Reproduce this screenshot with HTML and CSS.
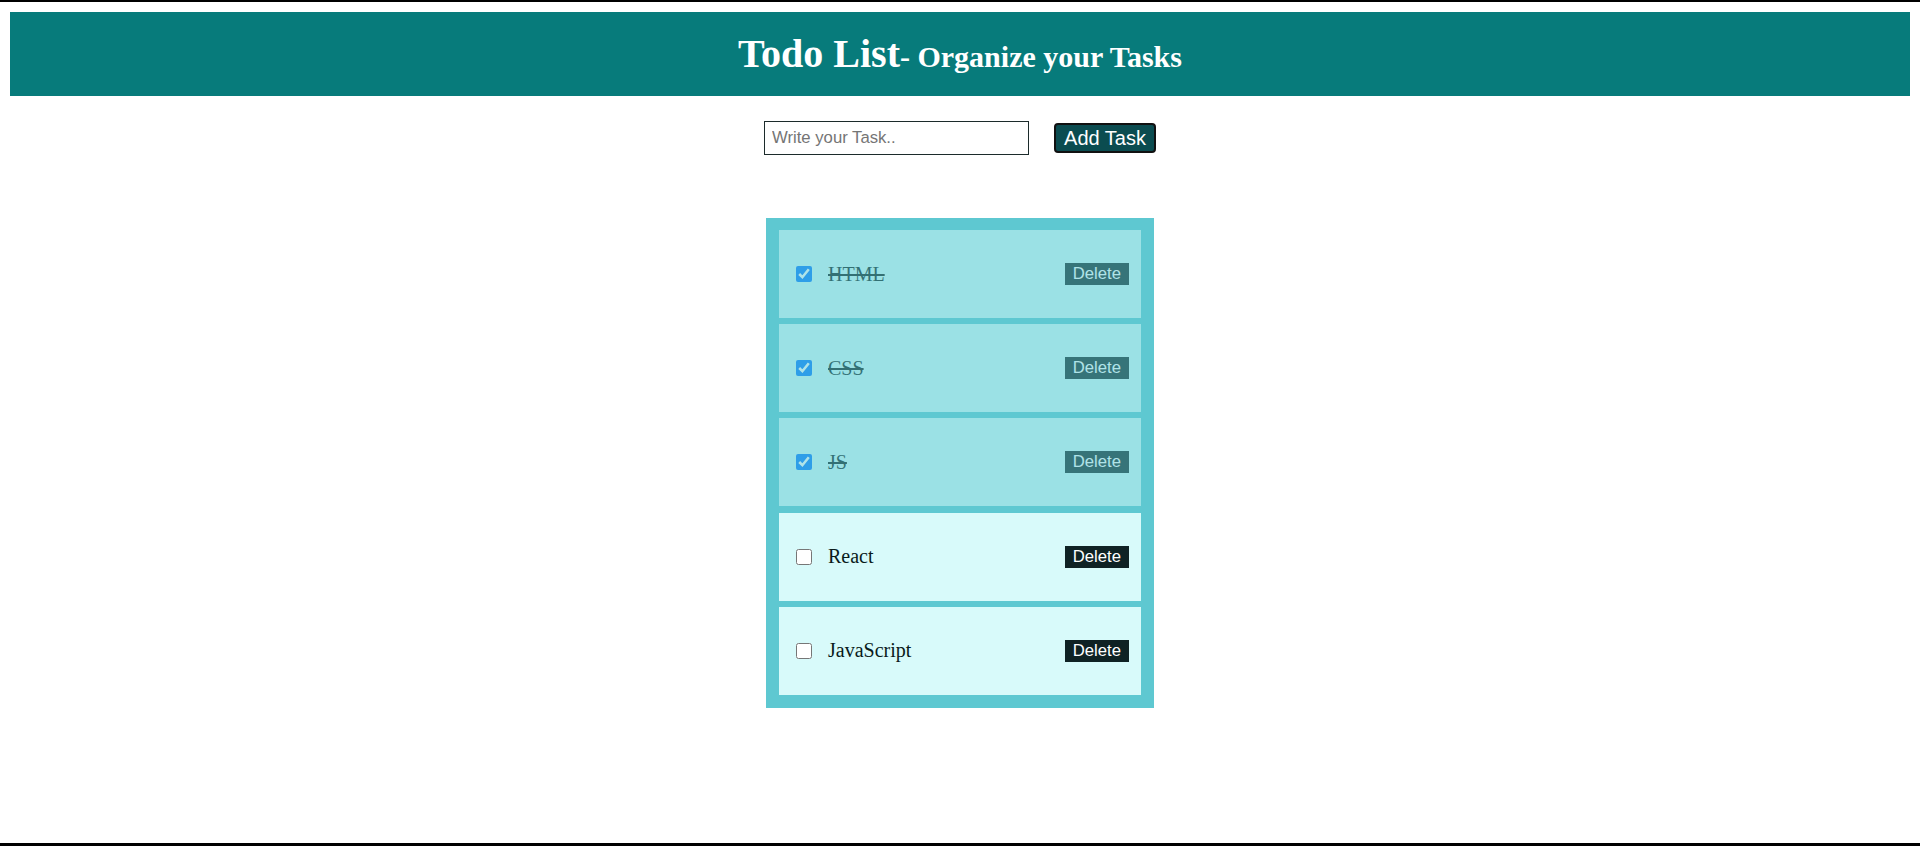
FILE: index.html
```html
<!DOCTYPE html>
<html lang="en">
<head>
<meta charset="utf-8">
<title>Todo List</title>
<link rel="stylesheet" href="styles.css">
</head>
<body>
  <header class="header">
    <h1 class="title">Todo List<span class="subtitle">- Organize your Tasks</span></h1>
  </header>
  <div class="add-row">
    <input class="task-input" type="text" placeholder="Write your Task..">
    <button class="add-btn" type="button">Add Task</button>
  </div>
  <ul class="list">
    <li class="item done"><input class="check" type="checkbox" checked><span class="label">HTML</span><button class="del" type="button">Delete</button></li>
    <li class="item done"><input class="check" type="checkbox" checked><span class="label">CSS</span><button class="del" type="button">Delete</button></li>
    <li class="item done"><input class="check" type="checkbox" checked><span class="label">JS</span><button class="del" type="button">Delete</button></li>
    <li class="item"><input class="check" type="checkbox"><span class="label">React</span><button class="del" type="button">Delete</button></li>
    <li class="item"><input class="check" type="checkbox"><span class="label">JavaScript</span><button class="del" type="button">Delete</button></li>
  </ul>
</body>
</html>
```
FILE: styles.css
```css
html {
  box-sizing: border-box;
  min-height: 100vh;
  border-top: 2px solid #000;
  border-bottom: 3px solid #000;
  background: #fff;
}
body {
  margin: 10px;
  font-family: "Liberation Serif", "Times New Roman", serif;
}
.header {
  height: 84px;
  background: #077b7b;
  color: #fff;
  text-align: center;
}
.title {
  margin: 0;
  font-size: 40px;
  line-height: 84px;
  font-weight: bold;
}
.subtitle {
  font-size: 30px;
}
.add-row {
  display: flex;
  justify-content: center;
  align-items: center;
  gap: 25px;
  margin-top: 25px;
}
.task-input {
  box-sizing: border-box;
  width: 265px;
  height: 34px;
  margin: 0;
  padding: 0 7px;
  border: 1px solid #1c2b2b;
  font-family: "Liberation Sans", Arial, sans-serif;
  font-size: 16.7px;
  color: #000;
  outline: none;
}
.task-input::placeholder {
  color: #757575;
}
.add-btn {
  box-sizing: border-box;
  width: 102px;
  height: 30px;
  margin: 0;
  padding: 0 6px;
  border: 2px solid #111;
  border-radius: 4px;
  background: #0b4c50;
  color: #fff;
  font-family: "Liberation Sans", Arial, sans-serif;
  font-size: 20px;
  line-height: 24px;
}
.list {
  list-style: none;
  width: 388px;
  box-sizing: border-box;
  margin: 63px auto 0;
  padding: 12px 13px 13px;
  background: #5ec8d1;
  display: flex;
  flex-direction: column;
  gap: 6.2px;
}
.item {
  display: flex;
  align-items: center;
  height: 88px;
  padding: 0 12px 0 17px;
  background: #d8fafa;
  color: #0a1a1a;
  font-size: 20px;
}
.item.done {
  opacity: 0.5;
}
.item.done .label {
  text-decoration: line-through;
}
.check {
  width: 16px;
  height: 16px;
  margin: 0;
}
.label {
  flex: 1;
  margin-left: 16px;
}
.del {
  margin: 0;
  padding: 1px 8px;
  border: none;
  background: #0f2224;
  color: #fff;
  font-family: "Liberation Sans", Arial, sans-serif;
  font-size: 16.7px;
  line-height: 20px;
}
```
